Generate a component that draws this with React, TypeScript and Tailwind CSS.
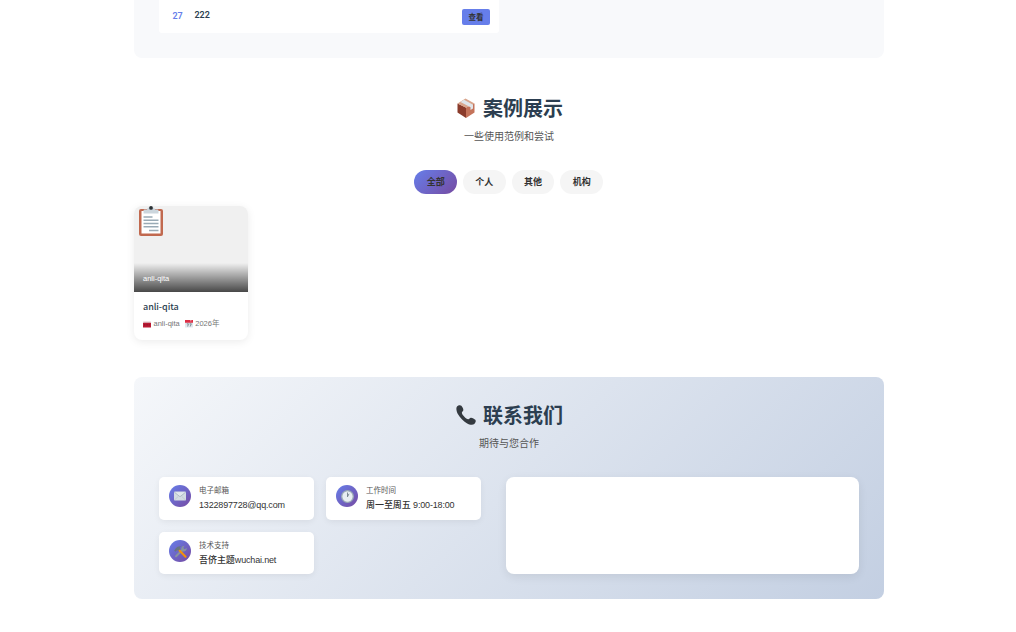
import { useState } from 'react';
import type { ReactNode } from 'react';

const categories = ['全部', '个人', '其他', '机构'];

function PackageIcon() {
  return (
    <svg viewBox="0 0 20 20" className="h-5 w-5">
      <path d="M1.5 5.5 10 9.5V20L1.5 14.5Z" fill="#8a3b2b" />
      <path d="M18.5 5.5 10 9.5V20l8.5-5.5Z" fill="#c4735a" />
      <path d="M1.5 5.5 9.5.5l9 5L10 9.8Z" fill="#d9a58c" />
      <path d="M4.5 4 8 1.8l9 5v3.700l-2.500 1.500V9.200Z" fill="#dfe5ea" />
    </svg>
  );
}

function PhoneIcon() {
  return (
    <svg viewBox="0 0 20 20" className="h-5 w-5">
      <path
        d="M1 1.5C2.2.2 4.4-.3 5.4.8c1 1.2 2.2 3.3 1.9 4.5C7.1 6.3 5.7 6.8 5.9 7.9c.5 2.3 4 5.8 6.3 6.3 1.1.2 1.5-1.4 2.6-1.5 1.3-.2 3.6 1.1 4.5 2.1 1 1.2.2 3.2-1 4.2-1.5 1.2-4.7.9-7.5-.8C7.5 16.2 3.9 12.6 2 9.3.4 6.5-.2 3 1 1.5Z"
        fill="#343a40"
      />
    </svg>
  );
}

function ClipboardIcon() {
  return (
    <svg viewBox="0 0 24 30" className="h-[30px] w-6">
      <rect y="3" width="24" height="27" rx="2" fill="#c1694f" />
      <rect x="2.5" y="5" width="19" height="22.5" fill="#fff" />
      <path d="M4.5 7.5V4.500q0-1 1-1H8q.5-2 2-2h4q1.500 0 2 2h2.500q1 0 1 1v3Z" fill="#ccd6dd" />
      <circle cx="12" cy="1.9" r="1.9" fill="#292f33" />
      <path d="M4.5 11h9M4.5 14.2h15M4.5 17.5h15M4.5 20.8h15M10 24.5h9.5" stroke="#99aab5" strokeWidth="1.4" />
    </svg>
  );
}

function TagIcon() {
  return (
    <svg viewBox="0 0 8 8" className="h-2 w-2">
      <path d="M0 3.5 1 1l1 2 1-2 1 2 1-2 1 2 1-2 1 2.5Z" fill="#c98591" />
      <rect y="3" width="8" height="4.5" fill="#bb1a34" />
      <path d="M1 4.9h6" stroke="#7e1024" strokeWidth=".9" strokeDasharray="1 .6" />
    </svg>
  );
}

function CalendarIcon() {
  return (
    <svg viewBox="0 0 8 8" className="h-2 w-2">
      <rect width="8" height="7.5" rx=".5" fill="#e1e8ed" />
      <path d="M0 0h8v2.8H0Z" fill="#dd2e44" />
      <path d="M1.8 3.8h1.6L2.7 6.5M4.6 3.8h1.7L5.2 6.5" fill="none" stroke="#66757f" strokeWidth=".8" />
      <path d="M5 .8h1.5" stroke="#fff" strokeWidth=".6" />
    </svg>
  );
}

function MailIcon() {
  return (
    <svg viewBox="0 0 12 10" className="h-2.5 w-3">
      <rect y=".5" width="12" height="9" rx="1" fill="#d3dce2" />
      <path d="m.5 9 3.800-3.600M11.500 9 7.700 5.400" stroke="#b5c1ca" strokeWidth=".6" />
      <path d="m.4 1.200 5 4.100q.6.500 1.200 0l5-4.100" fill="#e1e8ed" stroke="#99aab5" strokeWidth=".7" />
    </svg>
  );
}

function ClockIcon() {
  return (
    <svg viewBox="0 0 13 13" className="h-[13px] w-[13px]">
      <circle cx="6.5" cy="6.5" r="5.8" fill="#e8eef2" stroke="#9aaab5" strokeWidth="1.3" />
      <path d="M6.5 2.5v4.300L8 3.800" fill="none" stroke="#66757f" strokeWidth=".8" />
    </svg>
  );
}

function ToolsIcon() {
  return (
    <svg viewBox="0 0 13 13" className="h-[13px] w-[13px]">
      <path d="m2 11.300 7-6.800" stroke="#87949e" strokeWidth="1.9" strokeLinecap="round" />
      <path d="M7.500 5.500C6.600 3 8 .9 10.500.8L9.300 2.900l1.200 1.300 2.200-1.100c.3 2.500-1.900 4-4.200 3.300Z" fill="#87949e" />
      <path d="m4.800 4.800 6.700 6.900" stroke="#f4900c" strokeWidth="2.1" strokeLinecap="round" />
      <path d="M.2 5.700 1.800 3.300Q3.500.8 7 1.200L5.700 2.700l.4 1.500L4.500 5.700 3 5 1.700 6.800Z" fill="#66757f" />
    </svg>
  );
}

const contacts = [
  { label: '电子邮箱', cjk: '', value: '1322897728@qq.com', icon: <MailIcon /> },
  { label: '工作时间', cjk: '周一至周五', value: ' 9:00-18:00', icon: <ClockIcon /> },
  { label: '技术支持', cjk: '吾侪主题', value: 'wuchai.net', icon: <ToolsIcon /> },
];

function SectionHeader({ icon, title, subtitle }: { icon: ReactNode; title: string; subtitle: string }) {
  return (
    <header className="flex flex-col items-center">
      <h2 className="flex h-[30px] items-center gap-[7px] pl-px text-[20px] font-bold leading-[30px] text-[#2c3e50]">
        {icon}
        <span className="pt-[2px]">{title}</span>
      </h2>
      <p className="mt-[6px] text-[10px] leading-4 text-[#555]">{subtitle}</p>
    </header>
  );
}

export default function App() {
  const [active, setActive] = useState('全部');

  return (
    <div className="h-[632px] overflow-hidden bg-white font-['Liberation_Sans','Noto_Sans_CJK_SC',sans-serif] text-[#333]">
      <main className="ml-[134px] w-[750px]">
        <section className="h-[57.5px] rounded-b-lg bg-[#f8f9fb] px-[25px]">
          <div className="flex h-[33px] w-[340px] rounded-b-[3px] bg-white pr-[9px] pl-[13.5px]">
            <span className="w-[22px] pt-[9px] font-['Roboto',sans-serif] text-[9px] font-semibold leading-[14px] tracking-[-0.1px] text-[#667eea]">27</span>
            <span className="flex-1 pt-2 font-['Roboto',sans-serif] text-[9px] font-semibold leading-[14px] tracking-[-0.05px] text-[#2c3e50]">222</span>
            <button type="button" className="mt-[9px] h-4 w-7 rounded-[2px] bg-[#667eea] pt-px text-[7.5px] font-bold leading-4">
              查看
            </button>
          </div>
        </section>

        <section className="h-[319.5px] pt-[35.5px]">
          <SectionHeader icon={<PackageIcon />} title="案例展示" subtitle="一些使用范例和尝试" />
          <div className="mt-[25px] flex justify-center gap-[6.1px] pr-[0.6px]">
            {categories.map((name) => (
              <button
                key={name}
                type="button"
                onClick={() => setActive(name)}
                className={`h-6 w-[42.6px] rounded-full text-[9px] font-bold leading-6 ${
                  active === name ? 'bg-linear-[135deg,#667eea,#764ba2]' : 'bg-[#f5f5f5]'
                }`}
              >
                {name}
              </button>
            ))}
          </div>
          <article className="mt-3 h-[134px] w-[114px] overflow-hidden rounded-lg bg-white shadow-[0_2px_8px_rgba(0,0,0,0.08)]">
            <div className="flex h-[86px] flex-col justify-between bg-[#f0f0f0]">
              <div className="pl-[5px]">
                <ClipboardIcon />
              </div>
              <div className="h-[29px] bg-linear-to-b from-transparent to-black/70 pt-[10px] pl-[9px] text-[7.5px] leading-3 text-white">
                anli-qita
              </div>
            </div>
            <h3 className="pt-2 pl-[9px] font-['Noto_Sans_CJK_SC',sans-serif] text-[9px] font-medium leading-[14px] tracking-[-0.05px] text-[#2c3e50]">
              anli-qita
            </h3>
            <div className="mt-1 flex items-center gap-[5px] pl-[9px] text-[7.5px] leading-3 text-[#777]">
              <span className="flex items-center gap-[2.5px]">
                <TagIcon />
                anli-qita
              </span>
              <span className="flex items-center gap-[2.5px]">
                <CalendarIcon />
                2026年
              </span>
            </div>
          </article>
        </section>

        <section className="h-[222px] rounded-lg bg-linear-[135deg,#f5f7fa,#c3cfe2] px-[25px] pt-[23px]">
          <SectionHeader icon={<PhoneIcon />} title="联系我们" subtitle="期待与您合作" />
          <div className="mt-[25px] flex gap-[25px]">
            <div className="grid w-[322px] grid-cols-2 grid-rows-[43px_42px] gap-3">
              {contacts.map((item) => (
                <div key={item.label} className="flex gap-2 rounded-[5px] bg-white pl-[10px] shadow-[0_2px_6px_rgba(0,0,0,0.06)]">
                  <div className="mt-2 flex h-[22px] w-[22px] items-center justify-center rounded-full bg-linear-[135deg,#667eea,#764ba2]">
                    {item.icon}
                  </div>
                  <div className="pt-[7px] whitespace-nowrap">
                    <div className="h-[13px] text-[7.5px] leading-[13px] text-[#555]">{item.label}</div>
                    <div className="mt-[1px] h-[14px] text-[9px] leading-[14px]">
                      <span className="font-medium tracking-[-0.05px]">{item.cjk}</span>
                      <span className="tracking-[-0.17px] whitespace-pre">{item.value}</span>
                    </div>
                  </div>
                </div>
              ))}
            </div>
            <div className="h-[97px] w-[353px] rounded-lg bg-white shadow-[0_3px_10px_rgba(0,0,0,0.08)]" />
          </div>
        </section>
      </main>
    </div>
  );
}
